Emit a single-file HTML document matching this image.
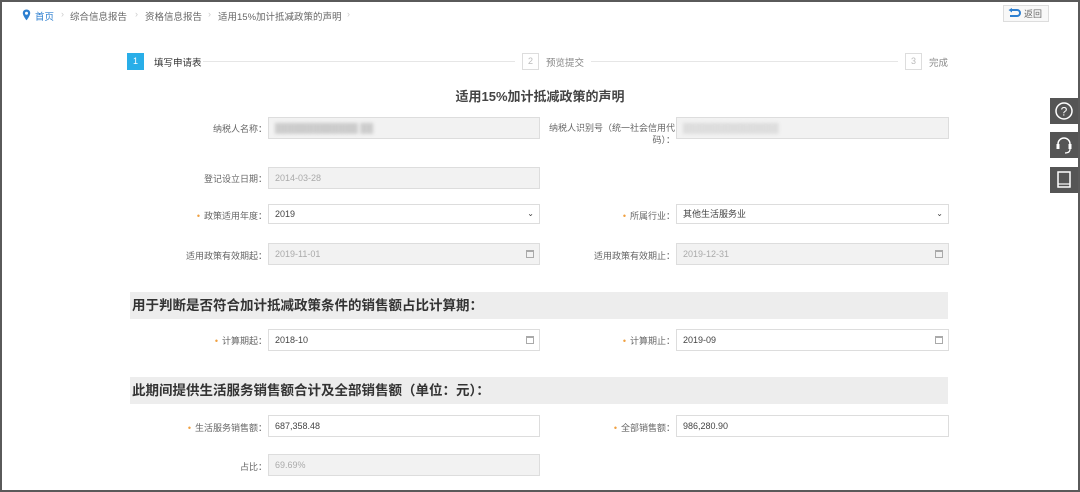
<!DOCTYPE html>
<html><head><meta charset="utf-8"><style>
*{margin:0;padding:0;box-sizing:border-box}
body{width:1080px;height:492px;overflow:hidden;background:#fff;font-family:"Liberation Sans","Noto Sans CJK SC",sans-serif;color:#555;position:relative}
.frame{position:absolute;left:0;top:0;width:1080px;height:492px;border:2px solid #5a5a5a;border-bottom-width:2px}
.a{position:absolute;white-space:nowrap}
.lbl{position:absolute;font-size:9px;color:#666;text-align:right;white-space:nowrap}
.lbl i{color:#f0a040;font-style:normal;margin-right:4px}
.in{position:absolute;height:22px;border:1px solid #ddd;font-size:9px;padding:0 6px;line-height:20px;color:#444;background:#fff}
.in.g{background:#f2f2f2;color:#aaa}
.sec{position:absolute;left:130px;width:818px;height:27px;background:#ededed;font-size:13.5px;font-weight:bold;color:#333;line-height:27px;padding-left:2px}
.cal{position:absolute;right:5px;top:6px;width:8px;height:8px;border:1px solid #aaa;border-top-width:2px}
.side{position:absolute;left:1050px;width:28px;height:26px;background:#555}
</style></head><body>
<div class="frame"></div>
<!-- breadcrumb -->
<svg class="a" style="left:22px;top:9px" width="9" height="12" viewBox="0 0 9 12"><path d="M4.5 0.5C2.3 0.5 0.8 2 0.8 4.1c0 2.6 3.7 7.2 3.7 7.2s3.7-4.6 3.7-7.2C8.2 2 6.7.5 4.5.5z" fill="#2d7fd0"/><circle cx="4.5" cy="4.2" r="1.5" fill="#fff"/></svg>
<div class="a" style="left:35px;top:9px;font-size:9.5px;color:#2d7fd0">首页</div>
<div class="a" style="left:61px;top:9px;font-size:9px;color:#ccc">›</div>
<div class="a" style="left:70px;top:9px;font-size:9.5px;color:#666">综合信息报告</div>
<div class="a" style="left:135px;top:9px;font-size:9px;color:#ccc">›</div>
<div class="a" style="left:145px;top:9px;font-size:9.5px;color:#666">资格信息报告</div>
<div class="a" style="left:208px;top:9px;font-size:9px;color:#ccc">›</div>
<div class="a" style="left:218px;top:9px;font-size:9.5px;color:#666">适用15%加计抵减政策的声明</div>
<div class="a" style="left:347px;top:9px;font-size:9px;color:#ccc">›</div>
<!-- return -->
<div class="a" style="left:1003px;top:5px;width:46px;height:17px;border:1px solid #ddd;background:#f8f8f8"></div>
<svg class="a" style="left:1008px;top:8px" width="13" height="11" viewBox="0 0 13 11"><path d="M3 2h6a3 3 0 0 1 0 6H2" stroke="#2d7fd0" stroke-width="2" fill="none"/><path d="M4 0L0.5 2 4 4.5z" fill="#2d7fd0"/></svg>
<div class="a" style="left:1024px;top:7px;font-size:9px;color:#666">返回</div>
<!-- steps -->
<div class="a" style="left:127px;top:53px;width:17px;height:17px;background:#29aee8;color:#fff;font-size:9px;text-align:center;line-height:17px">1</div>
<div class="a" style="left:154px;top:55px;font-size:9.5px;color:#333">填写申请表</div>
<div class="a" style="left:203px;top:61px;width:312px;height:1px;background:#e6e6e6"></div>
<div class="a" style="left:522px;top:53px;width:17px;height:17px;border:1px solid #ddd;color:#bbb;font-size:9px;text-align:center;line-height:15px">2</div>
<div class="a" style="left:546px;top:55px;font-size:9.5px;color:#888">预览提交</div>
<div class="a" style="left:591px;top:61px;width:307px;height:1px;background:#e6e6e6"></div>
<div class="a" style="left:905px;top:53px;width:17px;height:17px;border:1px solid #ddd;color:#bbb;font-size:9px;text-align:center;line-height:15px">3</div>
<div class="a" style="left:929px;top:55px;font-size:9.5px;color:#888">完成</div>
<!-- title -->
<div class="a" style="left:0;width:1080px;top:86px;text-align:center;font-size:13px;font-weight:bold;color:#444">适用15%加计抵减政策的声明</div>
<!-- row1 -->
<div class="lbl" style="right:813px;top:122px">纳税人名称：</div>
<div class="in g" style="left:268px;top:117px;width:272px"><span style="color:#ccc;filter:blur(1.5px)">█████████████ ██</span></div>
<div class="lbl" style="right:405px;top:122px;line-height:12px">纳税人识别号（统一社会信用代<br>码）：</div>
<div class="in g" style="left:676px;top:117px;width:273px"><span style="color:#ddd;filter:blur(1.5px)">███████████████</span></div>
<!-- row2 -->
<div class="lbl" style="right:813px;top:172px">登记设立日期：</div>
<div class="in g" style="left:268px;top:167px;width:272px">2014-03-28</div>
<!-- row3 -->
<div class="lbl" style="right:813px;top:209px"><i>•</i>政策适用年度：</div>
<div class="in" style="left:268px;top:204px;width:272px;height:20px;line-height:18px">2019<span style="position:absolute;right:5px;font-size:8px;color:#444">&#8964;</span></div>
<div class="lbl" style="right:405px;top:209px"><i>•</i>所属行业：</div>
<div class="in" style="left:676px;top:204px;width:273px;height:20px;line-height:18px">其他生活服务业<span style="position:absolute;right:5px;font-size:8px;color:#444">&#8964;</span></div>
<!-- row4 -->
<div class="lbl" style="right:813px;top:249px">适用政策有效期起：</div>
<div class="in g" style="left:268px;top:243px;width:272px">2019-11-01<span class="cal"></span></div>
<div class="lbl" style="right:405px;top:249px">适用政策有效期止：</div>
<div class="in g" style="left:676px;top:243px;width:273px">2019-12-31<span class="cal"></span></div>
<!-- sec1 -->
<div class="sec" style="top:292px">用于判断是否符合加计抵减政策条件的销售额占比计算期：</div>
<div class="lbl" style="right:813px;top:334px"><i>•</i>计算期起：</div>
<div class="in" style="left:268px;top:329px;width:272px">2018-10<span class="cal"></span></div>
<div class="lbl" style="right:405px;top:334px"><i>•</i>计算期止：</div>
<div class="in" style="left:676px;top:329px;width:273px">2019-09<span class="cal"></span></div>
<!-- sec2 -->
<div class="sec" style="top:377px">此期间提供生活服务销售额合计及全部销售额（单位：元）：</div>
<div class="lbl" style="right:813px;top:421px"><i>•</i>生活服务销售额：</div>
<div class="in" style="left:268px;top:415px;width:272px">687,358.48</div>
<div class="lbl" style="right:405px;top:421px"><i>•</i>全部销售额：</div>
<div class="in" style="left:676px;top:415px;width:273px">986,280.90</div>
<div class="lbl" style="right:813px;top:460px">占比：</div>
<div class="in g" style="left:268px;top:454px;width:272px">69.69%</div>
<!-- side icons -->
<div class="side" style="top:98px"><svg width="28" height="26"><circle cx="14" cy="13" r="8" stroke="#fff" stroke-width="1.5" fill="none"/><text x="14" y="17.5" font-size="12" fill="#fff" text-anchor="middle" font-family="Liberation Sans">?</text></svg></div>
<div class="side" style="top:132px"><svg width="28" height="26"><path d="M8 15v-3a6 6 0 0 1 12 0v3" stroke="#fff" stroke-width="1.5" fill="none"/><rect x="6.5" y="12" width="3" height="5" fill="#fff"/><rect x="18.5" y="12" width="3" height="5" fill="#fff"/><path d="M20 17q0 4-5 4" stroke="#fff" stroke-width="1.2" fill="none"/></svg></div>
<div class="side" style="top:167px"><svg width="28" height="26"><rect x="8" y="5" width="12" height="15" stroke="#fff" stroke-width="1.5" fill="none"/><line x1="8" y1="17" x2="20" y2="17" stroke="#fff" stroke-width="1.2"/></svg></div>
</body></html>
